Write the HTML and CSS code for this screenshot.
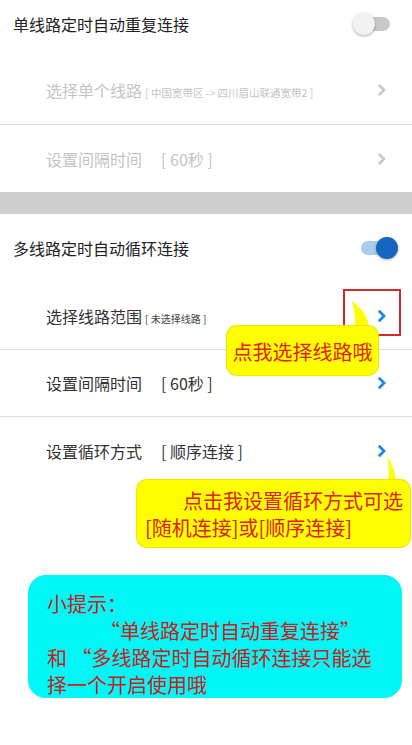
FILE: index.html
```html
<!DOCTYPE html>
<html lang="zh">
<head>
<meta charset="utf-8">
<link rel="stylesheet" href="styles.css">
</head>
<body>
<div class="page">
  <div class="row row-head">
    <span class="title">单线路定时自动重复连接</span>
    <span class="switch off"><span class="knob"></span></span>
  </div>
  <div class="row row-sub row-first disabled">
    <span class="label">选择单个线路<span class="small">[ 中国宽带区 -&gt; 四川眉山联通宽带2 ]</span></span>
    <svg class="chev" viewBox="0 0 9 14"><path d="M1.8 1.8 L7 7 L1.8 12.2" fill="none" stroke="currentColor" stroke-width="2.6"/></svg>
  </div>
  <div class="divider"></div>
  <div class="row row-sub row-last disabled">
    <span class="label">设置间隔时间<span class="val">[ 60秒 ]</span></span>
    <svg class="chev" viewBox="0 0 9 14"><path d="M1.8 1.8 L7 7 L1.8 12.2" fill="none" stroke="currentColor" stroke-width="2.6"/></svg>
  </div>
  <div class="band"></div>
  <div class="row row-head2">
    <span class="title">多线路定时自动循环连接</span>
    <span class="switch on"><span class="knob"></span></span>
  </div>
  <div class="row row-sub row-r5">
    <span class="label">选择线路范围<span class="small">[ 未选择线路 ]</span></span>
    <svg class="chev" viewBox="0 0 9 14"><path d="M1.8 1.8 L7 7 L1.8 12.2" fill="none" stroke="currentColor" stroke-width="2.8"/></svg>
  </div>
  <div class="divider"></div>
  <div class="row row-sub row-r6">
    <span class="label">设置间隔时间<span class="val">[ 60秒 ]</span></span>
    <svg class="chev" viewBox="0 0 9 14"><path d="M1.8 1.8 L7 7 L1.8 12.2" fill="none" stroke="currentColor" stroke-width="2.8"/></svg>
  </div>
  <div class="divider"></div>
  <div class="row row-sub row-r7">
    <span class="label">设置循环方式<span class="val">[ 顺序连接 ]</span></span>
    <svg class="chev" viewBox="0 0 9 14"><path d="M1.8 1.8 L7 7 L1.8 12.2" fill="none" stroke="currentColor" stroke-width="2.8"/></svg>
  </div>

  <div class="tipbox">
    <p>小提示：</p>
    <p class="indent">“单线路定时自动重复连接”</p>
    <p>和 “多线路定时自动循环连接只能选</p>
    <p>择一个开启使用哦</p>
  </div>

  <div class="redbox"></div>
  <svg class="tail tail1" viewBox="0 0 40 40"><path d="M2 1 C10 6 20 16 24 29 L24 40 L6 40 C8 28 6 12 2 1 Z" fill="#ffff00"/></svg>
  <div class="bubble bubble1">点我选择线路哦</div>
  <svg class="tail tail2" viewBox="0 0 20 30"><path d="M3 0 C8 6 12 14 14 30 L4 30 C6 20 5 8 3 0 Z" fill="#ffff00"/></svg>
  <div class="bubble bubble2">
    <p class="r">点击我设置循环方式可选</p>
    <p>[随机连接]或[顺序连接]</p>
  </div>
</div>
</body>
</html>
```

FILE: styles.css
```css
* { box-sizing: border-box; }
html, body { margin: 0; padding: 0; background: #fff; }
body {
  font-family: "Noto Sans CJK SC", "Noto Sans", sans-serif;
  color: #222;
}
.page {
  position: relative;
  width: 412px;
  height: 745px;
  overflow: hidden;
  background: #fff;
}
.row {
  display: flex;
  align-items: center;
  justify-content: space-between;
}
.row-head { height: 48px; padding: 0 22px 0 13px; }
.row-head2 { height: 68px; padding: 0 14px 0 13px; }
.title { font-size: 16px; color: #222; letter-spacing: 0; }
.row-sub { padding: 0 26px 0 46px; }
.row-first { height: 76px; padding-top: 8px; }
.row-last { height: 67px; }
.row-r5 { height: 67px; }
.row-r6 { height: 66px; }
.row-r7 { height: 68px; }
.label { font-size: 16px; color: #333; display: flex; align-items: baseline; }
.small { font-size: 10.5px; margin-left: 3px; color: #444; }
.row-r5 .small { font-size: 10px; }
.disabled .label, .disabled .small { color: #c4c4c4; }
.val { margin-left: 19px; font-size: 16px; }
.chev { width: 9px; height: 14px; color: #1e88e5; }
.disabled .chev { color: #c8c8c8; }
.divider { height: 1px; background: #dcdcdc; }
.band { height: 22px; background: #cfcfcf; }
.switch {
  position: relative;
  display: inline-block;
  width: 37px;
  height: 22px;
}
.switch::before {
  content: "";
  position: absolute;
  left: 4px; right: 0; top: 4px; height: 14px;
  border-radius: 7px;
  background: #c9c9c9;
}
.switch .knob {
  position: absolute;
  top: 0;
  width: 22px; height: 22px;
  border-radius: 50%;
}
.switch.off .knob { left: 0; background: #f2f2f2; box-shadow: 0 1px 3px rgba(0,0,0,.35); }
.switch.on::before { background: #a9cdee; left: 0; right: 4px; }
.switch.on .knob { right: 0; background: #1565c0; box-shadow: 0 1px 3px rgba(0,0,0,.3); }

.tipbox {
  margin: 90px 10px 0 28px;
  width: 374px;
  height: 123px;
  border-radius: 18px;
  background: #00f7f7;
  padding: 15px 10px 0 19px;
  color: #c82020;
  font-size: 20px;
  line-height: 27px;
}
.tipbox p { margin: 0; }
.tipbox .indent { padding-left: 53px; }

.redbox {
  position: absolute;
  left: 343px; top: 289px;
  width: 58px; height: 47px;
  border: 2px solid #d42a2a;
}
.tail { position: absolute; }
.tail1 { left: 350px; top: 300px; width: 30px; height: 30px; }
.tail2 { left: 383px; top: 457px; width: 20px; height: 26px; }
.bubble {
  position: absolute;
  background: #ffff00;
  border-radius: 10px;
  color: #e0201a;
  font-size: 20px;
  box-shadow: 0 0 1px 1px #e6e400;
}
.bubble p { margin: 0; }
.bubble1 {
  left: 227px; top: 326px;
  width: 151px; height: 49px;
  display: flex; align-items: center; justify-content: center;
  padding-top: 2px;
}
.bubble2 {
  left: 137px; top: 480px;
  width: 273px; height: 67px;
  padding: 7px 7px 0 8px;
  line-height: 27px;
}
.bubble2 .r { text-align: right; }
```
